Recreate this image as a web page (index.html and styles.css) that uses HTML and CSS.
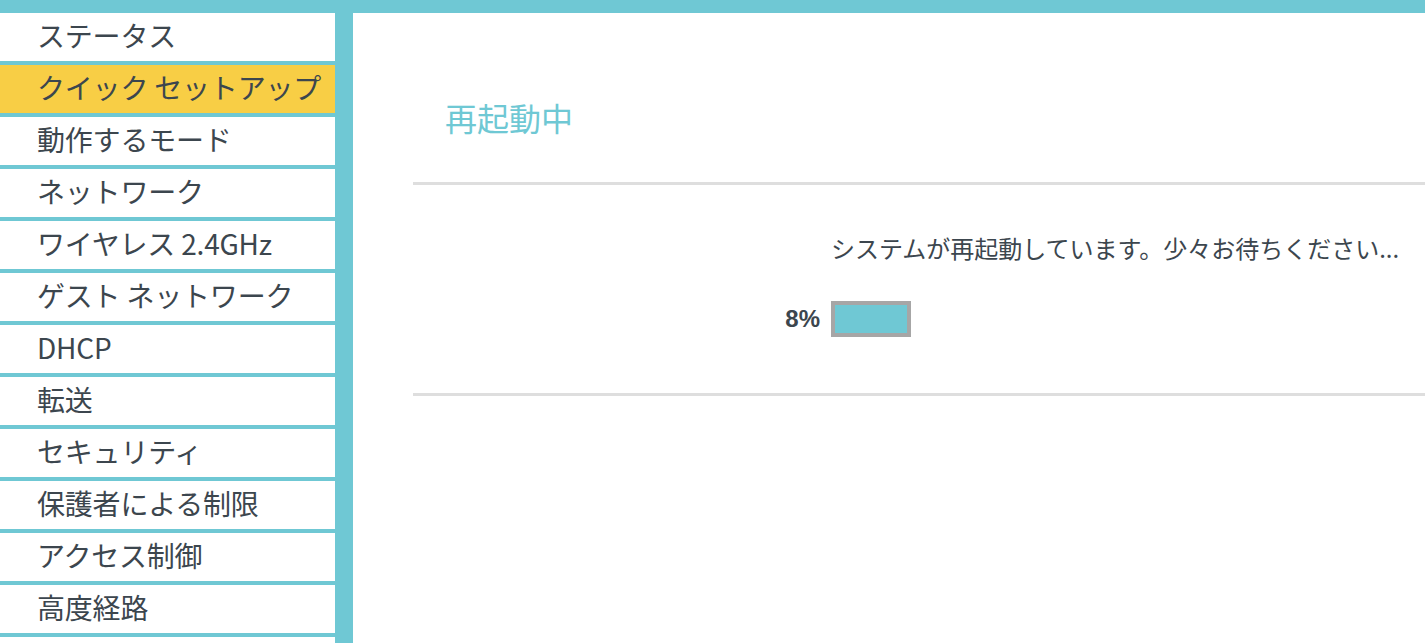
FILE: index.html
```html
<!DOCTYPE html>
<html lang="ja">
<head>
<meta charset="utf-8">
<title>再起動中</title>
<link rel="stylesheet" href="styles.css">
</head>
<body>
<div class="page">
  <nav class="sidebar">
    <div class="menu-item">ステータス</div>
    <div class="menu-item active">クイック セットアップ</div>
    <div class="menu-item">動作するモード</div>
    <div class="menu-item">ネットワーク</div>
    <div class="menu-item">ワイヤレス 2.4GHz</div>
    <div class="menu-item">ゲスト ネットワーク</div>
    <div class="menu-item">DHCP</div>
    <div class="menu-item">転送</div>
    <div class="menu-item">セキュリティ</div>
    <div class="menu-item">保護者による制限</div>
    <div class="menu-item">アクセス制御</div>
    <div class="menu-item">高度経路</div>
    <div class="menu-item"></div>
  </nav>
  <main class="content">
    <h1 class="title">再起動中</h1>
    <section class="panel">
      <div class="panel-grid">
        <div class="label-cell"></div>
        <div class="message">システムが再起動しています。少々お待ちください...</div>
        <div class="label-cell percent">8%</div>
        <div class="bar-cell"><div class="progress"><div class="progress-fill"></div></div></div>
      </div>
    </section>
  </main>
</div>
</body>
</html>
```

FILE: styles.css
```css
html, body {
  margin: 0;
  padding: 0;
}
body {
  font-family: "Noto Sans CJK JP", "Noto Sans", sans-serif;
  color: #3c464e;
  background: #6fc8d4;
}
.page {
  box-sizing: border-box;
  height: 100vh;
  overflow: hidden;
  padding-top: 13px;
  display: flex;
  gap: 18px;
  background: #6fc8d4;
}
.sidebar {
  width: 335px;
  flex: none;
  display: flex;
  flex-direction: column;
  gap: 4px;
}
.menu-item {
  box-sizing: border-box;
  height: 48px;
  line-height: 44px;
  padding-left: 37px;
  padding-bottom: 4px;
  background: #ffffff;
  font-size: 28px;
  letter-spacing: -0.2px;
  white-space: nowrap;
  color: #3c464e;
  flex: none;
}
.menu-item.active {
  background: #f8ce45;
}
.content {
  flex: 1;
  background: #ffffff;
  padding-left: 60px;
}
.title {
  margin: 84px 0 0 32px;
  font-size: 32px;
  line-height: 40px;
  font-weight: 400;
  color: #6fc8d4;
  height: 85px;
}
.panel {
  border-top: 3px solid #dedede;
  border-bottom: 3px solid #dedede;
  padding: 47px 0 56px;
}
.panel-grid {
  display: grid;
  grid-template-columns: 418px 1fr;
  row-gap: 37px;
  align-items: center;
}
.message {
  font-size: 24px;
  line-height: 32px;
  white-space: nowrap;
}
.percent {
  text-align: right;
  padding-right: 11px;
  font-family: "Liberation Sans", Arial, sans-serif;
  font-weight: 700;
  font-size: 24px;
  line-height: 28px;
}
.progress {
  box-sizing: border-box;
  width: 80px;
  height: 36px;
  border: 4px solid #a6a6a6;
  background: #ffffff;
}
.progress-fill {
  height: 100%;
  width: 100%;
  background: #6fc8d4;
}
```
